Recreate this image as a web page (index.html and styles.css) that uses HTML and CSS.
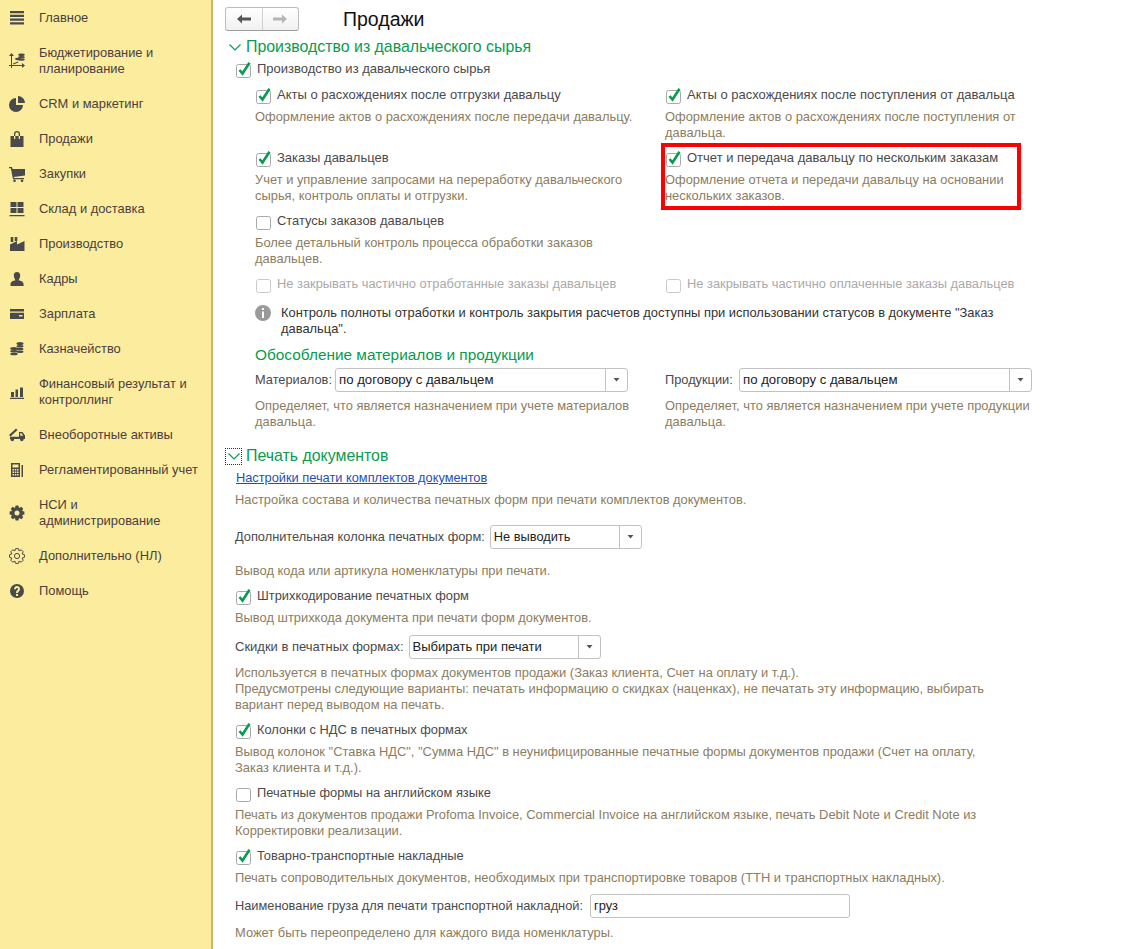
FILE: index.html
```html
<!DOCTYPE html>
<html lang="en">
<head>
    <meta charset="UTF-8">
    <title>Продажи</title>
    <link rel="stylesheet" href="styles.css">
</head>
<body>
    <svg class="defs">
        <defs>
            <symbol id="on" viewBox="0 0 17 17">
                <rect x=".5" y="2.500" width="14" height="13" rx="2" fill="#fff" stroke="#a8a8a8"/>
                <path d="M3.500 8l3 3.500L13.500 .8" fill="none" stroke="#0a9a50" stroke-width="2.600"/>
            </symbol>
            <symbol id="off" viewBox="0 0 17 17">
                <rect x=".5" y="2.500" width="14" height="13" rx="2" fill="#fff" stroke="#a8a8a8"/>
            </symbol>
            <symbol id="chevron" viewBox="0 0 14 14">
                <path d="M1.500 4.500L7 10l5.500-5.500" fill="none" stroke="#0a9a50" stroke-width="1.200"/>
            </symbol>
            <symbol id="arrow-down" viewBox="0 0 7 4">
                <path d="M.5 0h6L3.500 3.500z" fill="#555"/>
            </symbol>
        </defs>
    </svg>

    <div class="page">
        <nav class="sidebar">
            <a class="nav-item">
                <svg class="nav-icon" viewBox="0 0 16 16"><path d="M1 1h14v2.200H1zM1 4.700h14v2.200H1zM1 8.500h14v2.200H1zM1 12.200h14v2.200H1z"/></svg>
                <span>Главное</span>
            </a>
            <a class="nav-item">
                <svg class="nav-icon" viewBox="0 0 16 16"><path d="M2.500 0L5 3H3v9h10v-2l3 2.500-3 2.500v-2H3v2H2v-2H0v-1h2V3H0zM4 10.500l5-2 .4.9-5 2z"/><ellipse cx="12.500" cy="1.800" rx="3.300" ry="1.400"/><ellipse cx="12.500" cy="4.200" rx="3.300" ry="1.200"/><ellipse cx="9" cy="6" rx="3" ry="1.200"/><ellipse cx="12.500" cy="6.600" rx="3.300" ry="1.200"/></svg>
                <span>Бюджетирование и<br>планирование</span>
            </a>
            <a class="nav-item">
                <svg class="nav-icon" viewBox="0 0 16 16"><path d="M7 2a7 7 0 1 0 7 7H7zM9 0v7h7a7 7 0 0 0-7-7z"/></svg>
                <span>CRM и маркетинг</span>
            </a>
            <a class="nav-item">
                <svg class="nav-icon" viewBox="0 0 16 16"><path d="M1.500 5H5V3a3 3 0 0 1 6 0v2h3.500v11h-13zM6.300 5h3.400V3a1.700 1.700 0 0 0-3.400 0zM5 5v3h1.300V5zm4.700 0v3H11V5z" fill-rule="evenodd"/></svg>
                <span>Продажи</span>
            </a>
            <a class="nav-item">
                <svg class="nav-icon" viewBox="0 0 16 16"><path d="M0 1h3l.6 2H16v6.500L4.800 11l.2 1h10v1.200H4L1.800 2.300H0z"/><circle cx="5.500" cy="14.800" r="1.300"/><circle cx="13" cy="14.800" r="1.300"/></svg>
                <span>Закупки</span>
            </a>
            <a class="nav-item">
                <svg class="nav-icon" viewBox="0 0 16 16"><path d="M1.500 1h6v5h-6zM8.500 1h6v5h-6zM1.500 7h6v5h-6zM8.500 7h6v5h-6zM.5 14h15v1.300H.5z"/></svg>
                <span>Склад и доставка</span>
            </a>
            <a class="nav-item">
                <svg class="nav-icon" viewBox="0 0 16 16"><path d="M1.700 1h2.600v5H1.700zM5.700 1h2.600v4H5.700zM1 15V8.500L8 5v3.500L15.500 5v10z"/></svg>
                <span>Производство</span>
            </a>
            <a class="nav-item">
                <svg class="nav-icon" viewBox="0 0 16 16"><path d="M8 1c2.200 0 3.200 1.500 3.200 3.500S10 8.600 9.600 9.200c2.500.6 5 1.300 5 4.300V15H1.500v-1.500c0-3 2.500-3.700 5-4.300C6 8.600 4.800 6.500 4.800 4.500S5.800 1 8 1z"/></svg>
                <span>Кадры</span>
            </a>
            <a class="nav-item">
                <svg class="nav-icon" viewBox="0 0 16 16"><path d="M1 3h14v2.500H1zM1 6.800h14V13H1zm9 2.200v1.500h3.500V9z" fill-rule="evenodd"/></svg>
                <span>Зарплата</span>
            </a>
            <a class="nav-item">
                <svg class="nav-icon" viewBox="0 0 16 16"><ellipse cx="11" cy="2.500" rx="3.500" ry="1.500"/><ellipse cx="11" cy="5.300" rx="3.500" ry="1.200"/><ellipse cx="5" cy="7.500" rx="3.800" ry="1.500"/><ellipse cx="11" cy="8" rx="3.500" ry="1.200"/><ellipse cx="5" cy="10.300" rx="3.800" ry="1.200"/><ellipse cx="11" cy="10.700" rx="3.500" ry="1.200"/><ellipse cx="5" cy="13" rx="3.800" ry="1.300"/></svg>
                <span>Казначейство</span>
            </a>
            <a class="nav-item">
                <svg class="nav-icon" viewBox="0 0 16 16"><path d="M2 8h3v5H2zM6.500 5.500H9V13H6.500zM11 3.500h3V13h-3zM1 13.700h14V15H1z"/></svg>
                <span>Финансовый результат и<br>контроллинг</span>
            </a>
            <a class="nav-item">
                <svg class="nav-icon" viewBox="0 0 16 16"><path d="M0 8L7 1.500 8.500 3l-7 6.500zM10 5h3.500L16 8.500V12H1V9.800h9zM11.200 6.200v2.600h3l-1.700-2.600z" fill-rule="evenodd"/><circle cx="3.300" cy="12.500" r="1.800"/><circle cx="12.800" cy="12.500" r="1.800"/></svg>
                <span>Внеоборотные активы</span>
            </a>
            <a class="nav-item">
                <svg class="nav-icon" viewBox="0 0 16 16"><path d="M2 1h9v14H2zM3.500 2.500v3h6v-3zM3.500 7v1.500H5V7zm2.300 0v1.500h1.500V7zM8 7v1.500h1.500V7zM3.500 9.500V11H5V9.500zm2.300 0V11h1.500V9.500zm2.200 0V11h1.500V9.500zM3.500 12v1.500H5V12zm2.300 0v1.500h1.500V12zM8 12v1.500h1.500V12z" fill-rule="evenodd"/><path d="M12.500 3H14v12h-1.500z"/></svg>
                <span>Регламентированный учет</span>
            </a>
            <a class="nav-item">
                <svg class="nav-icon" viewBox="0 0 16 16"><path fill-rule="evenodd" d="M6.600.6h2.800l.7 2.300 2.140-1.120 1.980 1.980-1.140 2.140 2.320.7v2.800l-2.320.7 1.140 2.140-1.980 1.980-2.140-1.140-.7 2.320H6.600l-.7-2.320-2.140 1.140-1.980-1.980 1.140-2.140-2.320-.7V6.600l2.320-.7-1.140-2.140 1.980-1.980L5.900 2.920zM8 5.500a2.500 2.500 0 1 0 0 5 2.500 2.500 0 0 0 0-5z"/></svg>
                <span>НСИ и<br>администрирование</span>
            </a>
            <a class="nav-item">
                <svg class="nav-icon gear-line" viewBox="0 0 16 16"><path d="M6.600.6h2.800l.7 2.300 2.140-1.120 1.980 1.980-1.140 2.140 2.320.7v2.800l-2.320.7 1.140 2.140-1.980 1.980-2.140-1.140-.7 2.320H6.600l-.7-2.320-2.140 1.140-1.980-1.980 1.140-2.140-2.320-.7V6.600l2.320-.7-1.140-2.140 1.980-1.980L5.900 2.920z"/><circle cx="8" cy="8" r="2.600"/></svg>
                <span>Дополнительно (НЛ)</span>
            </a>
            <a class="nav-item">
                <svg class="nav-icon" viewBox="0 0 16 16"><path fill-rule="evenodd" d="M8 1a7 7 0 1 1 0 14A7 7 0 0 1 8 1zM7 11v2h2v-2zM5 6.200h2c0-.8.400-1.200 1-1.200s1 .4 1 1c0 1-2 1.300-2 3.500V10h2v-.3c0-1.400 2-1.700 2-3.800C11 4.200 9.700 3 8 3 6.200 3 5 4.300 5 6.200z"/></svg>
                <span>Помощь</span>
            </a>
        </nav>

        <main class="content">
            <header class="topbar">
                <div class="history">
                    <button class="history-btn">
                        <svg width="14" height="10" viewBox="0 0 14 10"><path d="M0 5l5-4.500V3.500h9v3H5v3z" fill="#555"/></svg>
                    </button>
                    <button class="history-btn">
                        <svg width="14" height="10" viewBox="0 0 14 10"><path d="M14 5L9 .5V3.500H0v3h9v3z" fill="#b5b5b5"/></svg>
                    </button>
                </div>
                <h1 class="page-title">Продажи</h1>
            </header>

            <div class="section-title">
                <span class="toggle"><svg width="14" height="14"><use href="#chevron"/></svg></span>
                Производство из давальческого сырья
            </div>
            <div class="section-body first-body">
                <label class="check"><svg class="box"><use href="#on"/></svg>Производство из давальческого сырья</label>

                <div class="options">
                    <div class="option">
                        <label class="check"><svg class="box"><use href="#on"/></svg>Акты о расхождениях после отгрузки давальцу</label>
                        <p class="desc">Оформление актов о расхождениях после передачи давальцу.</p>
                    </div>
                    <div class="option">
                        <label class="check"><svg class="box"><use href="#on"/></svg>Акты о расхождениях после поступления от давальца</label>
                        <p class="desc">Оформление актов о расхождениях после поступления от<br>давальца.</p>
                    </div>
                    <div class="option">
                        <label class="check"><svg class="box"><use href="#on"/></svg>Заказы давальцев</label>
                        <p class="desc">Учет и управление запросами на переработку давальческого<br>сырья, контроль оплаты и отгрузки.</p>
                    </div>
                    <div class="option marked">
                        <label class="check"><svg class="box"><use href="#on"/></svg>Отчет и передача давальцу по нескольким заказам</label>
                        <p class="desc">Оформление отчета и передачи давальцу на основании<br>нескольких заказов.</p>
                    </div>
                    <div class="option">
                        <label class="check tight"><svg class="box"><use href="#off"/></svg>Статусы заказов давальцев</label>
                        <p class="desc">Более детальный контроль процесса обработки заказов<br>давальцев.</p>
                    </div>
                    <div class="option"></div>
                    <div class="option">
                        <label class="check disabled"><svg class="box"><use href="#off"/></svg>Не закрывать частично отработанные заказы давальцев</label>
                    </div>
                    <div class="option">
                        <label class="check disabled"><svg class="box"><use href="#off"/></svg>Не закрывать частично оплаченные заказы давальцев</label>
                    </div>
                </div>

                <div class="info">
                    <svg class="info-icon" viewBox="0 0 16 16"><path fill-rule="evenodd" fill="#9a9a9a" d="M8 0a8 8 0 1 1 0 16A8 8 0 0 1 8 0zM7 3v2h2V3zM7 6.500V13h2V6.500z"/></svg>
                    <p>Контроль полноты отработки и контроль закрытия расчетов доступны при использовании статусов в документе "Заказ<br>давальца".</p>
                </div>

                <h2 class="group-title">Обособление материалов и продукции</h2>
                <div class="options split">
                    <div class="option">
                        <div class="field">
                            <span class="label-materials">Материалов:</span>
                            <div class="select select-wide"><span>по договору с давальцем</span><i class="select-btn"><svg width="7" height="4"><use href="#arrow-down"/></svg></i></div>
                        </div>
                        <p class="desc desc-field">Определяет, что является назначением при учете материалов<br>давальца.</p>
                    </div>
                    <div class="option">
                        <div class="field">
                            <span class="label-products">Продукции:</span>
                            <div class="select select-wide"><span>по договору с давальцем</span><i class="select-btn"><svg width="7" height="4"><use href="#arrow-down"/></svg></i></div>
                        </div>
                        <p class="desc desc-field">Определяет, что является назначением при учете продукции<br>давальца.</p>
                    </div>
                </div>
            </div>

            <div class="section-title print-title">
                <span class="toggle focused"><svg width="14" height="14"><use href="#chevron"/></svg></span>
                Печать документов
            </div>
            <div class="section-body print-body">
                <a class="link">Настройки печати комплектов документов</a>
                <p class="desc desc-link">Настройка состава и количества печатных форм при печати комплектов документов.</p>

                <div class="field field-far">
                    <span>Дополнительная колонка печатных форм:</span>
                    <div class="select select-extra"><span>Не выводить</span><i class="select-btn"><svg width="7" height="4"><use href="#arrow-down"/></svg></i></div>
                </div>
                <p class="desc desc-far">Вывод кода или артикула номенклатуры при печати.</p>

                <label class="check spaced"><svg class="box"><use href="#on"/></svg>Штрихкодирование печатных форм</label>
                <p class="desc">Вывод штрихкода документа при печати форм документов.</p>

                <div class="field field-near">
                    <span>Скидки в печатных формах:</span>
                    <div class="select select-discount"><span>Выбирать при печати</span><i class="select-btn"><svg width="7" height="4"><use href="#arrow-down"/></svg></i></div>
                </div>
                <p class="desc desc-field">Используется в печатных формах документов продажи (Заказ клиента, Счет на оплату и т.д.).<br>Предусмотрены следующие варианты: печатать информацию о скидках (наценках), не печатать эту информацию, выбирать<br>вариант перед выводом на печать.</p>

                <label class="check spaced"><svg class="box"><use href="#on"/></svg>Колонки с НДС в печатных формах</label>
                <p class="desc">Вывод колонок "Ставка НДС", "Сумма НДС" в неунифицированные печатные формы документов продажи (Счет на оплату,<br>Заказ клиента и т.д.).</p>

                <label class="check spaced"><svg class="box"><use href="#off"/></svg>Печатные формы на английском языке</label>
                <p class="desc">Печать из документов продажи Profoma Invoice, Commercial Invoice на английском языке, печать Debit Note и Credit Note из<br>Корректировки реализации.</p>

                <label class="check spaced"><svg class="box"><use href="#on"/></svg>Товарно-транспортные накладные</label>
                <p class="desc">Печать сопроводительных документов, необходимых при транспортировке товаров (ТТН и транспортных накладных).</p>

                <div class="field field-input">
                    <span>Наименование груза для печати транспортной накладной:</span>
                    <div class="text-input">груз</div>
                </div>
                <p class="desc desc-last">Может быть переопределено для каждого вида номенклатуры.</p>
            </div>
        </main>
    </div>
</body>
</html>
```

FILE: styles.css
```css
html, body {
    margin: 0;
    height: 949px;
    overflow: hidden;
    background: #fff;
}
body {
    font-family: "Liberation Sans", Arial, sans-serif;
    font-size: 13px;
    line-height: 16px;
    color: #4a4a4a;
}
p, h1, h2 {
    margin: 0;
    font-weight: normal;
}
.defs {
    display: none;
}
.page {
    display: flex;
    height: 949px;
}

/* sidebar */
.sidebar {
    width: 213px;
    flex: none;
    box-sizing: border-box;
    background: #fbec9e;
    border-right: 2px solid #c9b766;
    padding-left: 9px;
    font-size: 12.9px;
    color: #4b4040;
}
.nav-item {
    display: flex;
    align-items: center;
    padding: 10px 0 9px;
    gap: 14px;
}
.nav-item span {
    display: block;
}
.nav-icon {
    width: 16px;
    height: 16px;
    flex: none;
    fill: #4a4a4a;
}
.gear-line {
    fill: none;
    stroke: #4a4a4a;
    stroke-width: 1;
}

/* main area */
.content {
    flex: 1;
    padding-left: 12px;
}
.topbar {
    display: flex;
    align-items: center;
    height: 24px;
    padding-top: 7px;
    gap: 44px;
}
.history {
    display: flex;
    width: 74px;
    height: 24px;
    box-sizing: border-box;
    border: 1px solid #bdbdbd;
    border-bottom-color: #9c9c9c;
    border-radius: 3px;
    background: linear-gradient(#fff, #f1f1f1);
}
.history-btn {
    flex: 1;
    padding: 0;
    border: none;
    background: none;
}
.history-btn + .history-btn {
    border-left: 1px solid #d0d0d0;
}
.page-title {
    font-size: 19.5px;
    color: #111;
}
.section-title {
    display: flex;
    align-items: center;
    gap: 4px;
    height: 24px;
    margin-top: 4px;
    padding-left: 2px;
    font-size: 15.9px;
    color: #0a9a50;
}
.print-title {
    margin-top: 14px;
    margin-left: -2px;
}
.toggle {
    display: flex;
    width: 15px;
    height: 15px;
    align-items: center;
    justify-content: center;
}
.focused {
    width: 15px;
    height: 15px;
    border: 1px dotted #333;
}
.section-body {
    padding-left: 10px;
}
.first-body {
    margin-top: -1px;
}
.check {
    display: flex;
    align-items: center;
    gap: 4px;
    height: 22px;
    padding-left: 1px;
}
.spaced {
    margin-top: 6px;
    font-size: 12.85px;
}
.tight {
    font-size: 12.9px;
}
.disabled {
    font-size: 12.85px;
    color: #aaa;
}
.disabled .box {
    opacity: .6;
}
.box {
    width: 17px;
    height: 17px;
    flex: none;
    margin-top: 2px;
}
.desc {
    margin-top: 3px;
    font-size: 12.9px;
    color: #8c7d5f;
}
.options {
    display: grid;
    grid-template-columns: 410px 410px;
    row-gap: 6px;
    margin-top: 4px;
    padding-left: 20px;
}
.split {
    margin-top: 1px;
}
.marked {
    position: relative;
}
.marked::after {
    content: "";
    position: absolute;
    left: -4px;
    top: -4px;
    width: 352px;
    height: 59px;
    border: 4px solid #f00;
}
.info {
    display: flex;
    gap: 10px;
    margin: 10px 0 0 20px;
    font-size: 12.9px;
    color: #333;
}
.info-icon {
    width: 16px;
    height: 16px;
    flex: none;
}
.group-title {
    height: 24px;
    line-height: 24px;
    margin: 6px 0 0 20px;
    font-size: 15.4px;
    color: #0a9a50;
}
.field {
    display: flex;
    align-items: center;
    height: 24px;
    gap: 4px;
    font-size: 12.8px;
}
.label-materials {
    width: 76px;
}
.label-products {
    width: 70px;
}
.select, .text-input {
    display: flex;
    align-items: center;
    height: 24px;
    box-sizing: border-box;
    border: 1px solid #c2c2c2;
    border-radius: 3px;
    background: #fff;
    color: #222;
    padding-left: 3px;
}
.select span {
    flex: 1;
}
.select-btn {
    display: flex;
    align-items: center;
    justify-content: center;
    width: 21px;
    height: 100%;
    border-left: 1px solid #c2c2c2;
}
.select-wide {
    width: 293px;
    font-size: 13.2px;
}
.select-extra {
    width: 152px;
}
.select-discount {
    width: 192px;
}
.text-input {
    width: 260px;
}
.desc-field {
    margin-top: 6px;
}
.print-body .link {
    display: block;
    margin: 2px 0 0 1px;
    font-size: 12.8px;
    color: #1f4fb5;
    text-decoration: underline;
}
.desc-link {
    margin-top: 6px;
}
.field-far {
    margin-top: 17px;
    gap: 5px;
}
.desc-far {
    margin-top: 14px;
}
.field-near {
    margin-top: 9px;
    font-size: 13px;
    gap: 5px;
}
.field-input {
    margin-top: 8px;
    gap: 7px;
}
.desc-last {
    margin-top: 7px;
}
```
